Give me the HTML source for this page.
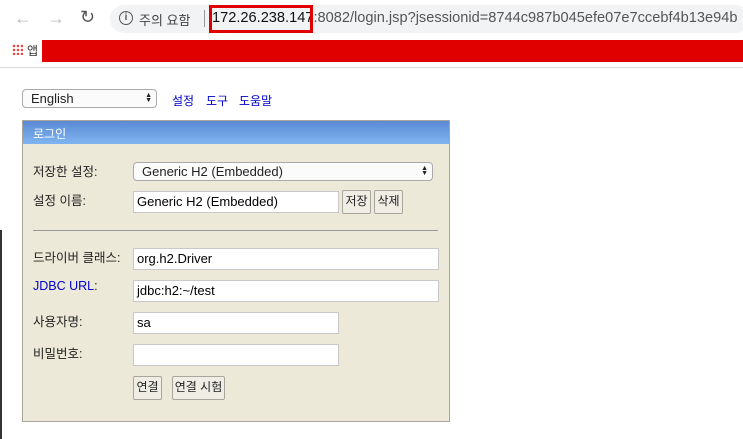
<!DOCTYPE html>
<html><head><meta charset="utf-8"><style>
*{box-sizing:border-box}
body{margin:0;width:743px;height:439px;overflow:hidden;background:#fff;font-family:"Liberation Sans","Noto Sans CJK KR",sans-serif;font-size:12px;color:#222;position:relative}
.a{position:absolute}
.inp{position:absolute;background:#fff;border:1px solid #c8c8c8;font-size:13px;padding:2px 3px;line-height:15px;color:#000}
.btn{position:absolute;background:#efede4;border:1px solid #a8a69c;border-radius:2px;font-size:12px;text-align:center;line-height:20px}
.lbl{position:absolute;left:33px;font-size:12.5px;color:#222}
.sel{position:absolute;background:#fbfbfb;border:1px solid #aaa;border-radius:4px;font-size:13px;padding-left:8px;line-height:17px}
.arr{position:absolute;right:4px;top:3px;font-size:7px;line-height:5px;color:#222}
</style></head><body>
<div class="a" style="left:0;top:0;width:743px;height:37px;background:#fff"></div>
<div class="a" style="left:14px;top:8px;font-size:18px;color:#bbb">&#8592;</div>
<div class="a" style="left:47px;top:8px;font-size:18px;color:#bbb">&#8594;</div>
<div class="a" style="left:80px;top:7px;font-size:18px;color:#555">&#8635;</div>
<div class="a" style="left:110px;top:5px;width:640px;height:28px;background:#f1f3f4;border-radius:14px"></div>
<div class="a" style="left:119px;top:11px;width:14px;height:14px;border:1.5px solid #555;border-radius:50%;font-size:10px;line-height:11px;text-align:center;font-weight:bold;color:#555">i</div>
<div class="a" style="left:139px;top:10px;font-size:13px;color:#444">주의 요함</div>
<div class="a" style="left:204px;top:10px;width:1px;height:17px;background:#999"></div>
<div class="a" style="left:212px;top:10px;font-size:14.6px;color:#555;white-space:nowrap"><span style="color:#111">172.26.238.147</span>:8082/login.jsp?jsessionid=8744c987b045efe07e7ccebf4b13e94b</div>
<div class="a" style="left:209px;top:5px;width:104px;height:28px;border:3px solid #e00000"></div>
<div class="a" style="left:12px;top:44px;width:11px;height:11px;background:
radial-gradient(circle,#e44 1.2px,transparent 1.4px) 0 0/4px 4px"></div>
<div class="a" style="left:27px;top:42px;font-size:12px;color:#333">앱</div>
<div class="a" style="left:42px;top:40px;width:701px;height:22px;background:#e00000"></div>
<div class="a" style="left:0;top:67px;width:743px;height:1px;background:#ddd"></div>
<div class="a" style="left:0;top:230px;width:2px;height:209px;background:#333"></div>

<div class="sel" style="left:22px;top:89px;width:135px;height:19px">English<div class="arr">▲<br>▼</div></div>
<div class="a" style="left:172px;top:92px;color:#00c">설정</div>
<div class="a" style="left:206px;top:92px;color:#00c">도구</div>
<div class="a" style="left:239px;top:92px;color:#00c">도움말</div>

<div class="a" style="left:22px;top:120px;width:428px;height:302px;background:#ece9d8;border:1px solid #aaa69b"></div>
<div class="a" style="left:23px;top:121px;width:426px;height:23px;background:linear-gradient(#5b8ad3,#7fb4f0);color:#fff;padding:4px 10px;font-size:12px">로그인</div>

<div class="lbl" style="top:161px">저장한 설정:</div>
<div class="sel" style="left:133px;top:162px;width:300px;height:19px;font-size:13px">Generic H2 (Embedded)<div class="arr">▲<br>▼</div></div>
<div class="lbl" style="top:190px">설정 이름:</div>
<div class="inp" style="left:133px;top:191px;width:206px;height:22px">Generic H2 (Embedded)</div>
<div class="btn" style="left:342px;top:190px;width:29px;height:24px">저장</div>
<div class="btn" style="left:374px;top:190px;width:29px;height:24px">삭제</div>
<div class="a" style="left:33px;top:230px;width:405px;height:1px;background:#999"></div>

<div class="lbl" style="top:247px">드라이버 클래스:</div>
<div class="inp" style="left:133px;top:248px;width:306px;height:22px">org.h2.Driver</div>
<div class="lbl" style="top:279px"><span style="color:#00c">JDBC URL</span>:</div>
<div class="inp" style="left:133px;top:280px;width:306px;height:22px">jdbc:h2:~/test</div>
<div class="lbl" style="top:311px">사용자명:</div>
<div class="inp" style="left:133px;top:312px;width:206px;height:22px">sa</div>
<div class="lbl" style="top:343px">비밀번호:</div>
<div class="inp" style="left:133px;top:344px;width:206px;height:22px"></div>
<div class="btn" style="left:133px;top:376px;width:29px;height:24px">연결</div>
<div class="btn" style="left:172px;top:376px;width:53px;height:24px">연결 시험</div>
</body></html>
